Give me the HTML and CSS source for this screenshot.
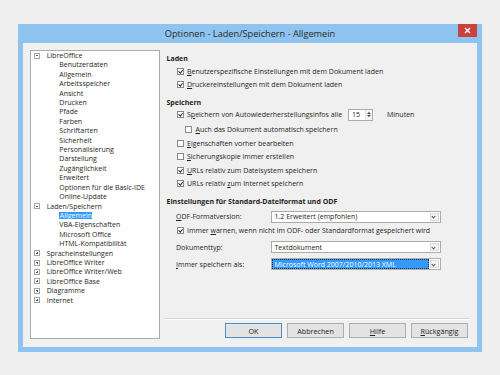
FILE: index.html
```html
<!DOCTYPE html>
<html lang="de">
<head>
<meta charset="utf-8">
<title>Optionen - Laden/Speichern - Allgemein</title>
<link rel="stylesheet" href="styles.css">
</head>
<body>
<div class="window">
  <div class="titlebar">
    <span></span>
    <span class="title">Optionen - Laden/Speichern - Allgemein</span>
    <span class="close"><svg width="7" height="7" viewBox="0 0 7 7"><path d="M1 1L6 6M6 1L1 6" stroke="#fff" stroke-width="1.4"/></svg></span>
  </div>
  <div class="client">
    <div class="tree">
      <div class="node top"><span class="exp minus"></span>LibreOffice</div>
      <div class="node child">Benutzerdaten</div>
      <div class="node child">Allgemein</div>
      <div class="node child">Arbeitsspeicher</div>
      <div class="node child">Ansicht</div>
      <div class="node child">Drucken</div>
      <div class="node child">Pfade</div>
      <div class="node child">Farben</div>
      <div class="node child">Schriftarten</div>
      <div class="node child">Sicherheit</div>
      <div class="node child">Personalisierung</div>
      <div class="node child">Darstellung</div>
      <div class="node child">Zugänglichkeit</div>
      <div class="node child">Erweitert</div>
      <div class="node child">Optionen für die Basic-IDE</div>
      <div class="node child">Online-Update</div>
      <div class="node top"><span class="exp minus"></span>Laden/Speichern</div>
      <div class="node child"><span class="selected">Allgemein</span></div>
      <div class="node child">VBA-Eigenschaften</div>
      <div class="node child">Microsoft Office</div>
      <div class="node child">HTML-Kompatibilität</div>
      <div class="node top"><span class="exp plus"></span>Spracheinstellungen</div>
      <div class="node top"><span class="exp plus"></span>LibreOffice Writer</div>
      <div class="node top"><span class="exp plus"></span>LibreOffice Writer/Web</div>
      <div class="node top"><span class="exp plus"></span>LibreOffice Base</div>
      <div class="node top"><span class="exp plus"></span>Diagramme</div>
      <div class="node top"><span class="exp plus"></span>Internet</div>
    </div>
    <div class="panel">
      <div class="settings">
        <div class="heading first">Laden</div>
        <div class="row cb after-head"><span class="box checked"></span><span><u>B</u>enutzerspezifische Einstellungen mit dem Dokument laden</span></div>
        <div class="row cb"><span class="box checked"></span><span><u>D</u>ruckereinstellungen mit dem Dokument laden</span></div>

        <div class="heading">Speichern</div>
        <div class="row cb after-head spinrow"><span class="box checked"></span><span class="spin-label">S<u>p</u>eichern von Autowiederherstellungsinfos alle</span>
          <span class="spin"><span class="spin-val">15</span><span class="spin-btns"><span class="up"></span><span class="down"></span></span></span>
          <span class="unit">Minuten</span></div>
        <div class="row cb sub"><span class="box"></span><span><u>A</u>uch das Dokument automatisch speichern</span></div>
        <div class="row cb"><span class="box"></span><span><u>E</u>igenschaften vorher bearbeiten</span></div>
        <div class="row cb"><span class="box"></span><span><u>S</u>icherungskopie immer erstellen</span></div>
        <div class="row cb"><span class="box checked"></span><span><u>U</u>RLs relativ zum Dateisystem speichern</span></div>
        <div class="row cb"><span class="box checked"></span><span>URLs relativ <u>z</u>um Internet speichern</span></div>

        <div class="heading">Einstellungen für Standard-Dateiformat und ODF</div>
        <div class="row field after-head"><span class="label"><u>O</u>DF-Formatversion:</span><span class="combo"><span class="combo-text">1.2 Erweitert (empfohlen)</span><span class="arrow"></span></span></div>
        <div class="row cb warn"><span class="box checked"></span><span>Immer <u>w</u>arnen, wenn nicht im ODF- oder Standardformat gespeichert wird</span></div>
        <div class="row field"><span class="label">Dokumentt<u>y</u>p:</span><span class="combo"><span class="combo-text">Textdokument</span><span class="arrow"></span></span></div>
        <div class="row field"><span class="label"><u>I</u>mmer speichern als:</span><span class="combo focus"><span class="combo-text">Microsoft Word 2007/2010/2013 XML</span><span class="arrow"></span></span></div>
      </div>
      <div class="sep"></div>
      <div class="buttons">
        <span class="btn default">OK</span>
        <span class="btn">Abbrechen</span>
        <span class="btn"><u>H</u>ilfe</span>
        <span class="btn"><u>R</u>ückgängig</span>
      </div>
    </div>
  </div>
</div>
</body>
</html>
```
FILE: styles.css
```css
* { box-sizing: border-box; }
body {
  margin: 0;
  background: #efefef;
  font-family: "Open Sans", "Noto Sans", sans-serif;
  color: #1e1e1e;
  width: 500px;
  height: 375px;
  overflow: hidden;
}
u { text-decoration: underline; text-underline-offset: 1px; text-decoration-thickness: 0.5px; }

.window {
  margin: 24px 0 0 18px;
  width: 464px;
  height: 328px;
  background: #8ec4ef;
  padding: 0 5px 5px;
  display: flex;
  flex-direction: column;
}
.titlebar {
  height: 19px;
  display: grid;
  grid-template-columns: 1fr auto 1fr;
  align-items: start;
}
.title {
  font-size: 9.2px;
  line-height: 20px;
  color: #2a2a2a;
  white-space: nowrap;
}
.close {
  justify-self: end;
  width: 19px;
  height: 13px;
  background: #c9423c;
  display: flex;
  align-items: center;
  justify-content: center;
}
.close svg { display: block; }

.client {
  flex: 1;
  background: #f0f0f0;
  display: flex;
}

/* tree */
.tree {
  margin: 7px 0 0 7px;
  width: 130px;
  height: 289px;
  border: 1px solid #acacac;
  background: #fff;
  font-size: 7px;
  flex: none;
}
.node {
  height: 9.42px;
  line-height: 9.42px;
  white-space: nowrap;
  display: flex;
  align-items: center;
}
.node.top { padding-left: 3px; }
.node.child { padding-left: 28.3px; }
.exp {
  width: 6px;
  height: 6px;
  border: 1px solid #a5a5a5;
  margin-right: 6.7px;
  position: relative;
  flex: none;
}
.exp::before {
  content: "";
  position: absolute;
  left: 1px; top: 1.5px;
  width: 2px; height: 1px;
  background: #555;
}
.exp.plus::after {
  content: "";
  position: absolute;
  left: 1.5px; top: 1px;
  width: 1px; height: 2px;
  background: #555;
}
.selected {
  background: #3399ff;
  color: #fff;
  line-height: 7px;
  padding: 0 0.5px;
}

/* right panel */
.panel {
  flex: 1;
  margin-left: 5px;
  display: flex;
  flex-direction: column;
  font-size: 7px;
}
.settings {
  flex: 1;
  padding-top: 10px;
  padding-left: 1.5px;
}
.heading {
  height: 11px;
  line-height: 11px;
  font-weight: 700;
  margin-top: 6px;
  white-space: nowrap;
}
.heading.first { margin-top: 0; }
.row {
  height: 12px;
  display: flex;
  align-items: center;
  white-space: nowrap;
  margin-top: 1.5px;
}
.row.after-head { margin-top: 1px; }
.row.cb { padding-left: 10px; }
.row.sub { padding-left: 18.5px; margin-top: 3px; }
.row.field { padding-left: 9.5px; margin-top: 5px; }
.row.field.after-head { margin-top: 4px; }
.row.warn { margin-top: 1.5px; }
.box {
  width: 7px;
  height: 7px;
  border: 1px solid #8a8a8a;
  background: #fff;
  margin-right: 3.5px;
  flex: none;
  position: relative;
}
.box.checked::after {
  content: "";
  position: absolute;
  left: 1.6px;
  top: 0.2px;
  width: 1.6px;
  height: 3.4px;
  border: solid #222;
  border-width: 0 1.2px 1.2px 0;
  transform: rotate(40deg);
}
.spin-label { width: 161px; }
.spin {
  width: 25px;
  height: 12px;
  border: 1px solid #acacac;
  background: #fff;
  display: flex;
  align-items: center;
  justify-content: space-between;
  padding-left: 3px;
}
.spin-btns {
  width: 7px;
  height: 10px;
  display: flex;
  flex-direction: column;
  align-items: center;
  justify-content: center;
  gap: 1.5px;
  border-left: 1px solid #e2e2e2;
  background: #f4f4f4;
}
.up { width: 0; height: 0; border-left: 2px solid transparent; border-right: 2px solid transparent; border-bottom: 2px solid #444; }
.down { width: 0; height: 0; border-left: 2px solid transparent; border-right: 2px solid transparent; border-top: 2px solid #444; }
.unit { margin-left: 14px; }

.label { width: 94.5px; flex: none; }
.combo {
  width: 170px;
  height: 12px;
  border: 1px solid #acacac;
  background: #fff;
  display: flex;
  align-items: stretch;
}
.combo-text {
  flex: 1;
  padding-left: 3px;
  display: flex;
  align-items: center;
  overflow: hidden;
}
.combo.focus .combo-text {
  background: #3399ff;
  color: #fff;
  margin: 0;
  padding-left: 2px;
  border: 1px dotted #1f2f44;
}
.arrow {
  width: 9px;
  margin: 1px;
  border: 1px solid #d9d9d9;
  background: #f2f2f2;
  position: relative;
  flex: none;
}
.arrow::after {
  content: "";
  position: absolute;
  left: 1.8px;
  top: 1.6px;
  width: 2px;
  height: 2px;
  border: solid #555;
  border-width: 0 1px 1px 0;
  transform: rotate(45deg);
}

.sep {
  height: 1px;
  background: #d5d5d5;
  margin-right: 7px;
  box-shadow: 0 1px 0 #fff;
}
.buttons {
  display: flex;
  justify-content: flex-end;
  gap: 5px;
  margin: 4px 9px 9px 0;
}
.btn {
  width: 57px;
  height: 15px;
  border: 1px solid #adadad;
  background: #e3e3e3;
  display: flex;
  align-items: center;
  justify-content: center;
  font-size: 7.2px;
  color: #222;
}
.btn.default { border-color: #4b8fc8; }
```
